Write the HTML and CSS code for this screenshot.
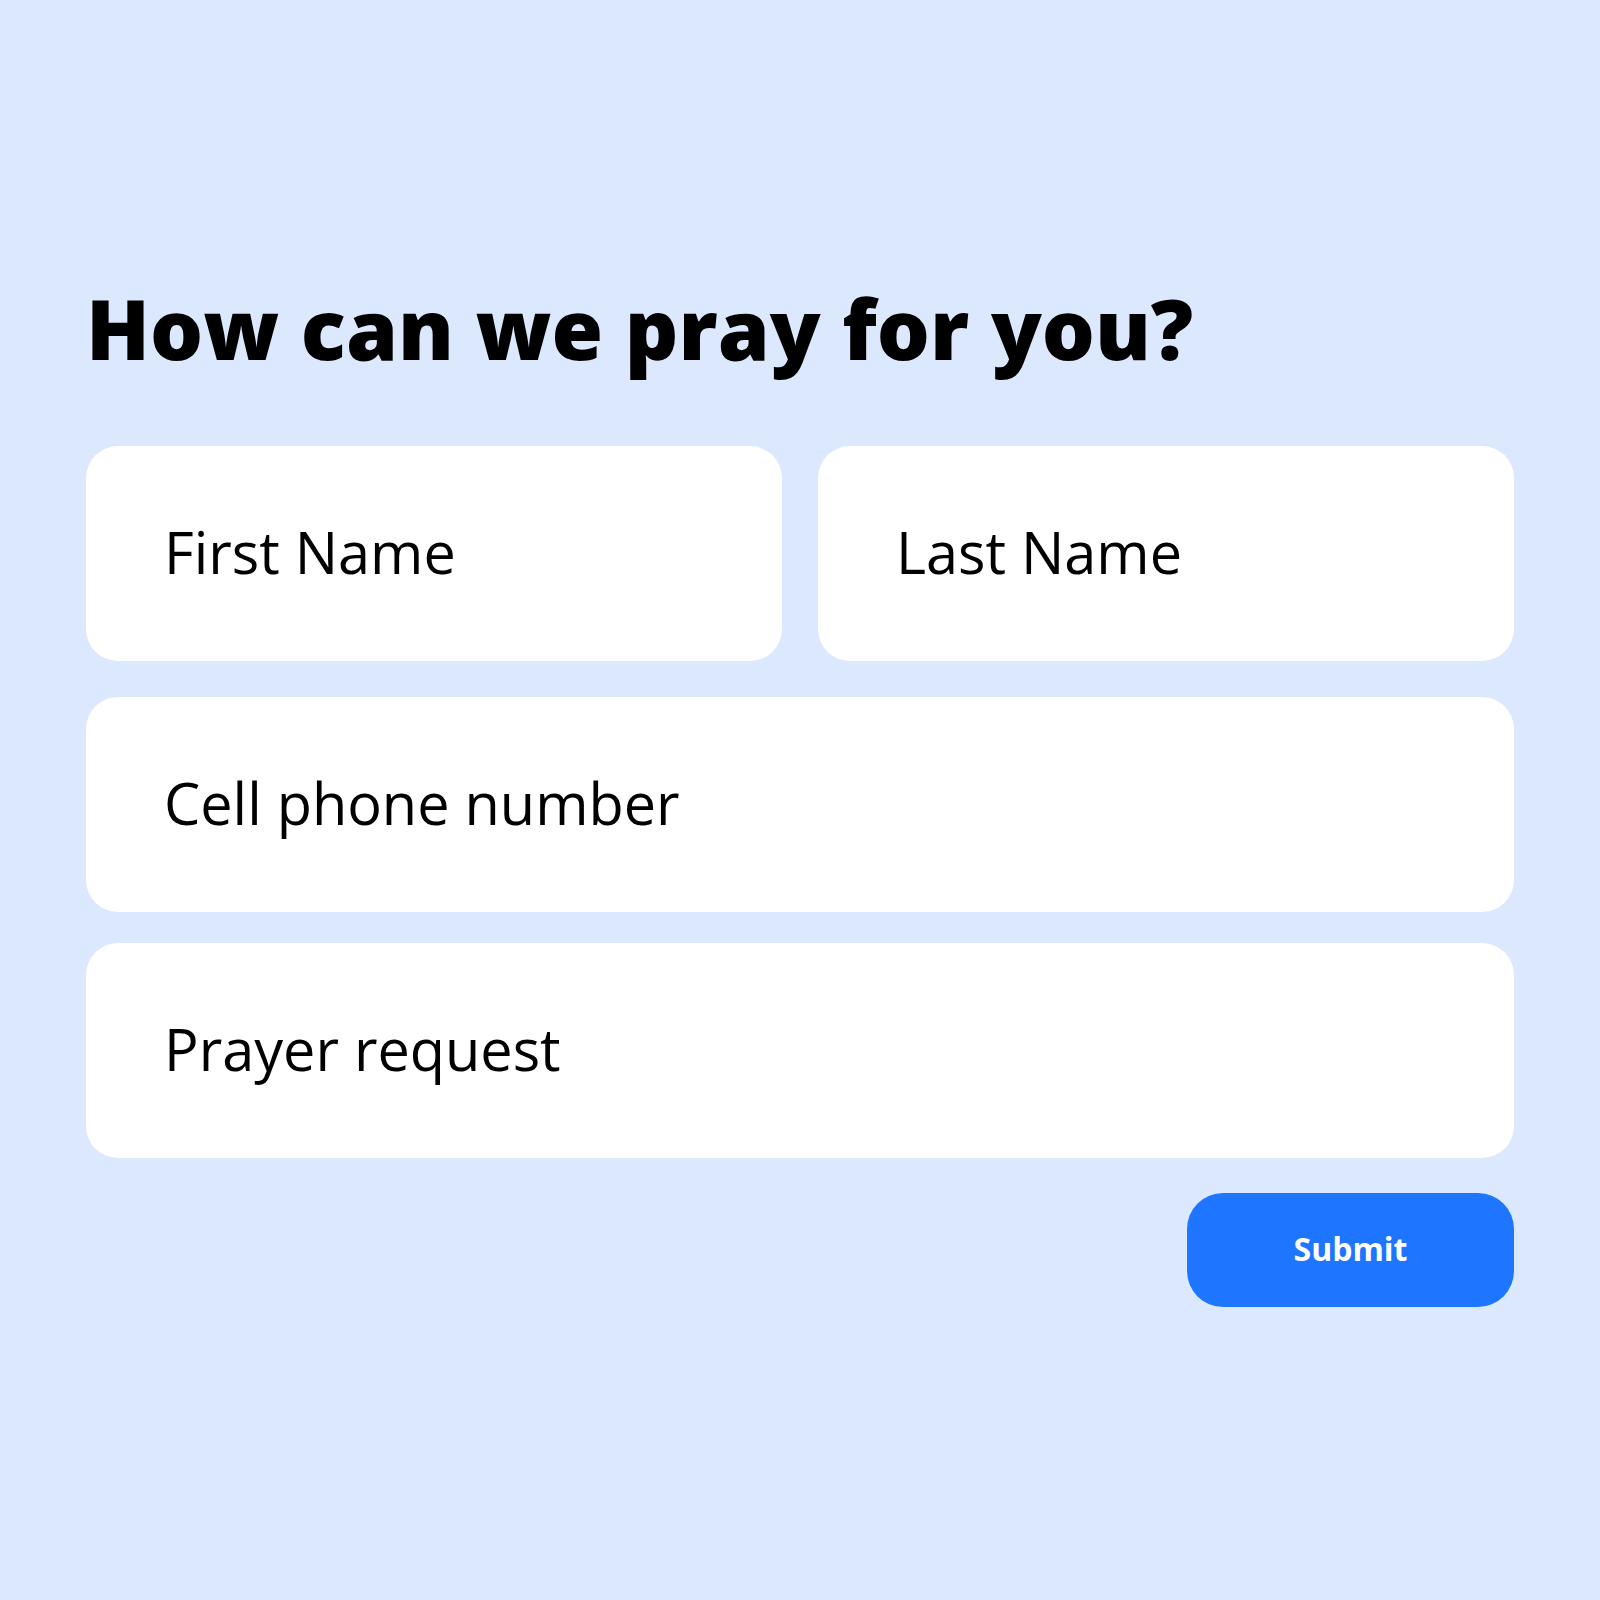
FILE: index.html
```html
<!DOCTYPE html>
<html lang="en">

<head>
    <meta charset="UTF-8">
    <meta name="viewport" content="width=device-width, initial-scale=1.0">
    <title>Prayer Request</title>
    <link rel="stylesheet" href="styles.css">
</head>

<body>
    <div id="prayer-form">
        <h1>How can we pray for you?</h1>
        <div class="name-row">
            <div class="input-field">First Name</div>
            <div class="input-field">Last Name</div>
        </div>
        <div class="input-field phone">Cell phone number</div>
        <div class="input-field request">Prayer request</div>
        <div class="actions">
            <button>Submit</button>
        </div>
    </div>
</body>

</html>
```

FILE: styles.css
```css
/* Page */
body {
    margin: 0;
    background-color: #dbe8fe;
    font-family: "Open Sans", "Liberation Sans", sans-serif;
    color: #000;
}

#prayer-form {
    width: 1428px;
    margin: 0 auto;
    padding-top: 286px;
    display: flex;
    flex-direction: column;
}

h1 {
    margin: 0 0 76px 0;
    font-size: 83.5px;
    line-height: 84px;
    font-weight: 800;
}

.name-row {
    display: grid;
    grid-template-columns: 1fr 1fr;
    gap: 36px;
}

.input-field {
    height: 215px;
    box-sizing: border-box;
    display: flex;
    align-items: center;
    padding: 0 0 5px 78px;
    background-color: #fff;
    border-radius: 32px;
    font-size: 57.6px;
}

.phone {
    margin-top: 36px;
}

.request {
    margin-top: 31px;
}

.actions {
    display: flex;
    justify-content: flex-end;
    margin-top: 35px;
}

button {
    width: 327px;
    height: 114px;
    padding: 0 0 4px 0;
    border: none;
    border-radius: 36px;
    background-color: #1e75ff;
    color: #fff;
    font-family: inherit;
    font-size: 32px;
    font-weight: 700;
    cursor: pointer;
}
```
